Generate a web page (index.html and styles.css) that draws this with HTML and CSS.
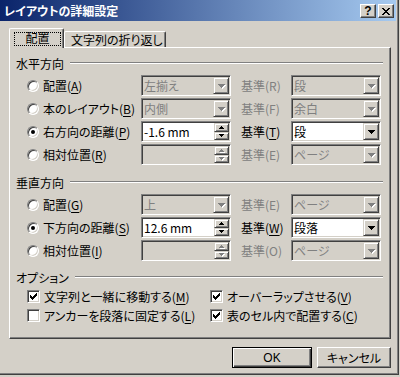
FILE: index.html
```html
<!DOCTYPE html>
<html lang="ja">
<head>
  <meta charset="UTF-8" />
  <title>レイアウトの詳細設定</title>
  <link rel="stylesheet" href="styles.css">
</head>
<body>
  <div class="window">
    <div class="titlebar">
      <span class="title">レイアウトの詳細設定</span>
      <div class="cbtns">
        <span class="cbtn help">?</span>
        <span class="cbtn">
          <svg width="8" height="7" viewBox="0 0 8 7"><path d="M0 0h2v1H0zM6 0h2v1H6zM1 1h2v1H1zM5 1h2v1H5zM2 2h4v1H2zM3 3h2v1H3zM2 4h4v1H2zM1 5h2v1H1zM5 5h2v1H5zM0 6h2v1H0zM6 6h2v1H6z" fill="#000"/></svg>
        </span>
      </div>
    </div>

    <div class="content">
      <div class="tabs">
        <div class="tab active"><span class="focus">配置</span></div>
        <div class="tab">文字列の折り返し</div>
      </div>

      <div class="panel">
        <div class="group-title"><span>水平方向</span></div>
        <div class="rows">
          <label class="opt"><span class="radio"></span><span>配置(<u>A</u>)</span></label>
          <div class="combo off"><span class="val">左揃え</span><span class="drop"><svg width="7" height="4"><path d="M0 0h7v1H0zM1 1h5v1H1zM2 2h3v1H2zM3 3h1v1H3z"/></svg></span></div>
          <span class="ref off">基準(R)</span>
          <div class="combo off"><span class="val">段</span><span class="drop"><svg width="7" height="4"><path d="M0 0h7v1H0zM1 1h5v1H1zM2 2h3v1H2zM3 3h1v1H3z"/></svg></span></div>

          <label class="opt"><span class="radio"></span><span>本のレイアウト(<u>B</u>)</span></label>
          <div class="combo off"><span class="val">内側</span><span class="drop"><svg width="7" height="4"><path d="M0 0h7v1H0zM1 1h5v1H1zM2 2h3v1H2zM3 3h1v1H3z"/></svg></span></div>
          <span class="ref off">基準(F)</span>
          <div class="combo off"><span class="val">余白</span><span class="drop"><svg width="7" height="4"><path d="M0 0h7v1H0zM1 1h5v1H1zM2 2h3v1H2zM3 3h1v1H3z"/></svg></span></div>

          <label class="opt"><span class="radio on"></span><span>右方向の距離(<u>P</u>)</span></label>
          <div class="combo"><span class="val">-1.6 mm</span><span class="spin"><span class="sb"><svg width="5" height="3"><path d="M2 0h1v1H2zM1 1h3v1H1zM0 2h5v1H0z"/></svg></span><span class="sb"><svg width="5" height="3"><path d="M0 0h5v1H0zM1 1h3v1H1zM2 2h1v1H2z"/></svg></span></span></div>
          <span class="ref">基準(<u>T</u>)</span>
          <div class="combo"><span class="val">段</span><span class="drop"><svg width="7" height="4"><path d="M0 0h7v1H0zM1 1h5v1H1zM2 2h3v1H2zM3 3h1v1H3z"/></svg></span></div>

          <label class="opt"><span class="radio"></span><span>相対位置(<u>R</u>)</span></label>
          <div class="combo off"><span class="val"></span><span class="spin"><span class="sb"><svg width="5" height="3"><path d="M2 0h1v1H2zM1 1h3v1H1zM0 2h5v1H0z"/></svg></span><span class="sb"><svg width="5" height="3"><path d="M0 0h5v1H0zM1 1h3v1H1zM2 2h1v1H2z"/></svg></span></span></div>
          <span class="ref off">基準(E)</span>
          <div class="combo off"><span class="val">ページ</span><span class="drop"><svg width="7" height="4"><path d="M0 0h7v1H0zM1 1h5v1H1zM2 2h3v1H2zM3 3h1v1H3z"/></svg></span></div>
        </div>

        <div class="group-title gap"><span>垂直方向</span></div>
        <div class="rows">
          <label class="opt"><span class="radio"></span><span>配置(<u>G</u>)</span></label>
          <div class="combo off"><span class="val">上</span><span class="drop"><svg width="7" height="4"><path d="M0 0h7v1H0zM1 1h5v1H1zM2 2h3v1H2zM3 3h1v1H3z"/></svg></span></div>
          <span class="ref off">基準(E)</span>
          <div class="combo off"><span class="val">ページ</span><span class="drop"><svg width="7" height="4"><path d="M0 0h7v1H0zM1 1h5v1H1zM2 2h3v1H2zM3 3h1v1H3z"/></svg></span></div>

          <label class="opt"><span class="radio on"></span><span>下方向の距離(<u>S</u>)</span></label>
          <div class="combo"><span class="val">12.6 mm</span><span class="spin"><span class="sb"><svg width="5" height="3"><path d="M2 0h1v1H2zM1 1h3v1H1zM0 2h5v1H0z"/></svg></span><span class="sb"><svg width="5" height="3"><path d="M0 0h5v1H0zM1 1h3v1H1zM2 2h1v1H2z"/></svg></span></span></div>
          <span class="ref">基準(<u>W</u>)</span>
          <div class="combo"><span class="val">段落</span><span class="drop"><svg width="7" height="4"><path d="M0 0h7v1H0zM1 1h5v1H1zM2 2h3v1H2zM3 3h1v1H3z"/></svg></span></div>

          <label class="opt"><span class="radio"></span><span>相対位置(<u>I</u>)</span></label>
          <div class="combo off"><span class="val"></span><span class="spin"><span class="sb"><svg width="5" height="3"><path d="M2 0h1v1H2zM1 1h3v1H1zM0 2h5v1H0z"/></svg></span><span class="sb"><svg width="5" height="3"><path d="M0 0h5v1H0zM1 1h3v1H1zM2 2h1v1H2z"/></svg></span></span></div>
          <span class="ref off">基準(O)</span>
          <div class="combo off"><span class="val">ページ</span><span class="drop"><svg width="7" height="4"><path d="M0 0h7v1H0zM1 1h5v1H1zM2 2h3v1H2zM3 3h1v1H3z"/></svg></span></div>
        </div>

        <div class="group-title gap small"><span>オプション</span></div>
        <div class="checks">
          <label class="opt"><span class="check"><svg width="7" height="7"><path d="M6 0h1v1H6zM5 1h2v1H5zM0 2h1v1H0zM4 2h3v1H4zM0 3h2v1H0zM3 3h3v1H3zM0 4h5v1H0zM1 5h3v1H1zM2 6h1v1H2z"/></svg></span><span>文字列と一緒に移動する(<u>M</u>)</span></label>
          <label class="opt"><span class="check"><svg width="7" height="7"><path d="M6 0h1v1H6zM5 1h2v1H5zM0 2h1v1H0zM4 2h3v1H4zM0 3h2v1H0zM3 3h3v1H3zM0 4h5v1H0zM1 5h3v1H1zM2 6h1v1H2z"/></svg></span><span>オーバーラップさせる(<u>V</u>)</span></label>
          <label class="opt"><span class="check"></span><span>アンカーを段落に固定する(<u>L</u>)</span></label>
          <label class="opt"><span class="check"><svg width="7" height="7"><path d="M6 0h1v1H6zM5 1h2v1H5zM0 2h1v1H0zM4 2h3v1H4zM0 3h2v1H0zM3 3h3v1H3zM0 4h5v1H0zM1 5h3v1H1zM2 6h1v1H2z"/></svg></span><span>表のセル内で配置する(<u>C</u>)</span></label>
        </div>
      </div>

      <div class="buttons">
        <button class="btn default">OK</button>
        <button class="btn cancel">キャンセル</button>
      </div>
    </div>
  </div>
</body>
</html>
```

FILE: styles.css
```css
* {
  box-sizing: border-box;
}
html, body {
  margin: 0;
  padding: 0;
}
body {
  width: 400px;
  height: 377px;
  overflow: hidden;
  background: #d4d0c8;
  font-family: "Noto Sans CJK JP", "Noto Sans", sans-serif;
  font-size: 12px;
  font-feature-settings: "palt";
  color: #000;
}
.window {
  width: 399px;
  height: 375px;
  background: #d4d0c8;
  border-right: 1px solid #404040;
  border-bottom: 1px solid #404040;
  box-shadow: inset -1px -1px #808080;
}

/* title bar */
.titlebar {
  width: 396px;
  height: 21px;
  display: flex;
  align-items: center;
  justify-content: space-between;
  padding: 0 2px 0 4px;
  background: linear-gradient(to right, #0a246a, #a6caf0);
}
.title {
  color: #fff;
  font-weight: bold;
  font-size: 12px;
  line-height: 14px;
}
.cbtns {
  display: flex;
  gap: 2px;
  margin-top: 1px;
}
.cbtn {
  width: 16px;
  height: 14px;
  display: flex;
  align-items: center;
  justify-content: center;
  background: #d4d0c8;
  border-top: 1px solid #fff;
  border-left: 1px solid #fff;
  border-right: 1px solid #404040;
  border-bottom: 1px solid #404040;
  box-shadow: inset -1px -1px #808080;
}
.cbtn.help {
  font-family: "Liberation Sans", Arial, sans-serif;
  font-weight: bold;
  font-size: 12px;
  line-height: 12px;
}

.content {
  padding: 7px 7px 0 9px;
}

/* tabs */
.tabs {
  display: flex;
  align-items: flex-end;
  height: 19px;
  position: relative;
  z-index: 1;
}
.tab {
  height: 16px;
  width: 102px;
  padding-left: 6px;
  line-height: 15px;
  white-space: nowrap;
  background: #d4d0c8;
  border-top: 1px solid #fff;
  border-left: 1px solid #fff;
  border-right: 1px solid #404040;
  box-shadow: inset -1px 0 #808080;
  border-radius: 2px 2px 0 0;
}
.tab.active {
  width: 55px;
  height: 20px;
  margin-bottom: -1px;
  padding: 3px 0 0 4px;
}
.focus {
  display: block;
  width: 47px;
  height: 14px;
  line-height: 12px;
  text-align: center;
  outline: 1px dotted #000;
  outline-offset: -1px;
}

/* tab page */
.panel {
  width: 382px;
  height: 292px;
  padding: 4px 7px 0 6px;
  border-top: 1px solid #fff;
  border-left: 1px solid #fff;
  border-right: 1px solid #404040;
  border-bottom: 1px solid #404040;
  box-shadow: inset -1px -1px #808080;
}
.group-title {
  display: flex;
  align-items: center;
  height: 22px;
}
.group-title::after {
  content: "";
  flex: 1;
  margin-left: 6px;
  border-top: 1px solid #808080;
  border-bottom: 1px solid #fff;
}
.group-title.gap {
  margin-top: 5px;
}
.group-title.small {
  height: 20px;
}

.rows {
  display: grid;
  grid-template-columns: 114px 90px 60px 90px;
  grid-auto-rows: 23px;
  align-items: center;
  padding-left: 11px;
}
.opt {
  display: flex;
  align-items: center;
  gap: 4px;
  white-space: nowrap;
}
u {
  text-underline-offset: 2px;
}
.radio {
  width: 12px;
  height: 12px;
  border-radius: 50%;
  background: #fff;
  border: 1px solid;
  border-color: #808080 #fff #fff #808080;
  box-shadow: inset 1px 1px #404040, inset -1px -1px #d4d0c8;
  display: flex;
  align-items: center;
  justify-content: center;
}
.radio.on::after {
  content: "";
  width: 4px;
  height: 4px;
  border-radius: 50%;
  background: #000;
}
.ref {
  padding-left: 10px;
  white-space: nowrap;
}
.off {
  color: #808080;
}

/* combo / spin fields */
.combo {
  height: 21px;
  display: flex;
  align-items: stretch;
  padding: 1px;
  background: #fff;
  border: 1px solid;
  border-color: #808080 #fff #fff #808080;
  box-shadow: inset 1px 1px #404040, inset -1px -1px #d4d0c8;
}
.combo.off {
  background: #d4d0c8;
}
.combo .val {
  flex: 1;
  padding-left: 1px;
  line-height: 17px;
  white-space: nowrap;
}
.drop, .sb {
  display: flex;
  align-items: center;
  justify-content: center;
  background: #d4d0c8;
  border-top: 1px solid #d4d0c8;
  border-left: 1px solid #d4d0c8;
  border-right: 1px solid #404040;
  border-bottom: 1px solid #404040;
  box-shadow: inset 1px 1px #fff, inset -1px -1px #808080;
}
.drop {
  width: 16px;
}
.spin {
  width: 15px;
  display: flex;
  flex-direction: column;
}
.sb {
  flex: 1;
}
.drop svg, .sb svg {
  fill: #000;
  display: block;
}
.off .drop svg, .off .sb svg {
  fill: #808080;
  filter: drop-shadow(1px 1px 0 #fff);
}

/* options */
.checks {
  display: grid;
  grid-template-columns: 183px 1fr;
  grid-auto-rows: 19px;
  align-items: center;
  padding-left: 11px;
}
.checks .opt {
  gap: 4px;
}
.check {
  width: 13px;
  height: 13px;
  background: #fff;
  border: 1px solid;
  border-color: #808080 #fff #fff #808080;
  box-shadow: inset 1px 1px #404040, inset -1px -1px #d4d0c8;
  display: flex;
  align-items: center;
  justify-content: center;
}
.check svg {
  display: block;
  fill: #000;
}

/* bottom buttons */
.buttons {
  display: flex;
  justify-content: flex-end;
  gap: 5px;
  margin-top: 8px;
}
.btn {
  height: 21px;
  padding: 0;
  font-family: inherit;
  font-size: 12px;
  font-feature-settings: "palt";
  color: #000;
  background: #d4d0c8;
  border-top: 1px solid #fff;
  border-left: 1px solid #fff;
  border-right: 1px solid #404040;
  border-bottom: 1px solid #404040;
  box-shadow: inset -1px -1px #808080;
  border-radius: 0;
}
.btn.default {
  width: 80px;
  border: 1px solid #000;
  box-shadow: inset 1px 1px #fff, inset -1px -1px #404040, inset -2px -2px #808080;
  font-family: "Liberation Sans", Arial, sans-serif;
}
.btn.cancel {
  width: 74px;
}
```
